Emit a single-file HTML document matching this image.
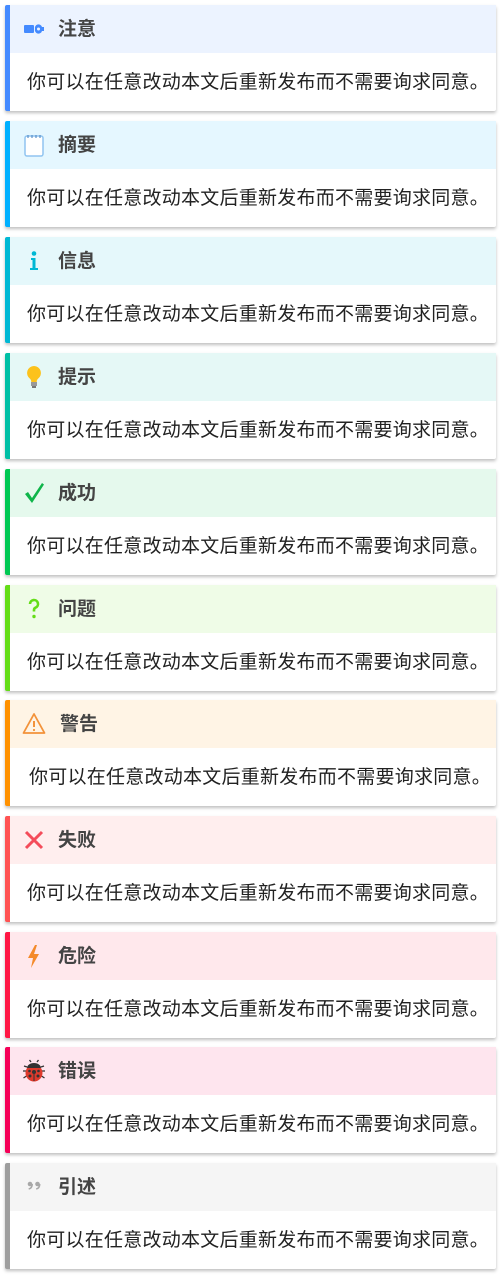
<!DOCTYPE html>
<html><head><meta charset="utf-8"><style>
body{margin:0;width:501px;height:1276px;background:#fff;position:relative;overflow:hidden;font-family:"Liberation Sans","Noto Sans CJK SC",sans-serif}
.b{position:absolute;left:5px;width:491px;height:106px;border-left:5px solid;box-sizing:border-box;background:#fff;box-shadow:0 2px 3px rgba(0,0,0,.25);border-radius:2px}
.h{height:48px;position:relative}
.h svg{position:absolute;left:12px;top:12px;width:24px;height:24px}
.t{position:absolute;left:48px;top:13px;font-size:19px;font-weight:bold;color:#444;line-height:24px}
.c{position:absolute;left:17px;top:66px;font-size:19px;letter-spacing:0.25px;color:#222;line-height:24px;white-space:nowrap}
</style></head><body>

<div class="b" style="top:5px;border-color:#448aff"><div class="h" style="background:#ecf3ff">
<svg viewBox="0 0 24 24"><rect x="2" y="8" width="10" height="8" rx="1" fill="#448aff"/><path d="M13 12a3.5 3.5 0 0 1 7-2h2v4h-2a3.5 3.5 0 0 1-7-2z" fill="#448aff"/><circle cx="16.5" cy="12" r="1.5" fill="#ecf3ff"/></svg>
<div class="t">注意</div></div><div class="c">你可以在任意改动本文后重新发布而不需要询求同意。</div></div>

<div class="b" style="top:121px;border-color:#00b0ff"><div class="h" style="background:#e5f7ff">
<svg viewBox="0 0 24 24"><rect x="3" y="3" width="18" height="20" rx="2" fill="#fff" stroke="#90c4f0" stroke-width="1.5"/><path d="M6 2v3M10 2v3M14 2v3M18 2v3" stroke="#5a8fc8" stroke-width="1.2"/></svg>
<div class="t">摘要</div></div><div class="c">你可以在任意改动本文后重新发布而不需要询求同意。</div></div>

<div class="b" style="top:237px;border-color:#00b8d4"><div class="h" style="background:#e5f8fb">
<svg viewBox="0 0 24 24"><circle cx="12" cy="4.5" r="2.3" fill="#00b8d4"/><path d="M9 9h4.5v10H16v2H8v-2h2.5v-8H9z" fill="#00b8d4"/></svg>
<div class="t">信息</div></div><div class="c">你可以在任意改动本文后重新发布而不需要询求同意。</div></div>

<div class="b" style="top:353px;border-color:#00bfa5"><div class="h" style="background:#e5f8f6">
<svg viewBox="0 0 24 24"><path d="M12 1a7 7 0 0 0-4 12.7c1 .9 1.3 2 1.3 3.3h5.4c0-1.3.3-2.4 1.3-3.3A7 7 0 0 0 12 1z" fill="#fcc21b"/><rect x="9" y="17" width="6" height="4" fill="#999"/><rect x="10" y="21" width="4" height="2" fill="#777"/></svg>
<div class="t">提示</div></div><div class="c">你可以在任意改动本文后重新发布而不需要询求同意。</div></div>

<div class="b" style="top:469px;border-color:#00c853"><div class="h" style="background:#e5f9ed">
<svg viewBox="0 0 24 24"><path d="M3 13l3-2 4 6L20 2l2 1.5L10 22z" fill="#0fb54a"/></svg>
<div class="t">成功</div></div><div class="c">你可以在任意改动本文后重新发布而不需要询求同意。</div></div>

<div class="b" style="top:585px;border-color:#64dd17"><div class="h" style="background:#effce7">
<svg viewBox="0 0 24 24"><path d="M8 7a4 4 0 1 1 5.5 3.7c-1 .5-1.5 1.3-1.5 2.3v1.5" fill="none" stroke="#64dd17" stroke-width="2.6"/><circle cx="12" cy="19.5" r="1.7" fill="#64dd17"/></svg>
<div class="t">问题</div></div><div class="c">你可以在任意改动本文后重新发布而不需要询求同意。</div></div>

<div class="b" style="top:700px;border-color:#ff9100"><div class="h" style="background:#fff4e5">
<svg viewBox="0 0 24 24"><path d="M12 2L1.5 21h21z" fill="none" stroke="#f3923a" stroke-width="1.8" stroke-linejoin="round"/><path d="M12 9v6" stroke="#f3923a" stroke-width="2"/><circle cx="12" cy="18" r="1.1" fill="#f3923a"/></svg>
<div class="t" style="left:50px">警告</div></div><div class="c" style="left:19px">你可以在任意改动本文后重新发布而不需要询求同意。</div></div>

<div class="b" style="top:816px;border-color:#ff5252"><div class="h" style="background:#ffeeee">
<svg viewBox="0 0 24 24"><path d="M4 4l16 16M20 4L4 20" stroke="#f44c5a" stroke-width="3"/></svg>
<div class="t">失败</div></div><div class="c">你可以在任意改动本文后重新发布而不需要询求同意。</div></div>

<div class="b" style="top:932px;border-color:#ff1744"><div class="h" style="background:#ffe8ec">
<svg viewBox="0 0 24 24"><path d="M13 1L6 14h5l-2 10 8-14h-5l3-9z" fill="#f48a2a"/></svg>
<div class="t">危险</div></div><div class="c">你可以在任意改动本文后重新发布而不需要询求同意。</div></div>

<div class="b" style="top:1047px;border-color:#f50057"><div class="h" style="background:#fee5ee">
<svg viewBox="0 0 24 24"><path d="M9 3L7.5 1M15 3l1.5-2M4 12H1M20 12h3M4.5 17l-3 2M19.5 17l3 2M5 8L2 7M19 8l3-1" stroke="#333" stroke-width="1.3"/><circle cx="12" cy="14" r="8.5" fill="#dd3a2c"/><path d="M5 9a7 5 0 0 1 14 0z" fill="#333"/><circle cx="12" cy="13" r="2" fill="#333"/><circle cx="8" cy="17" r="1.5" fill="#333"/><circle cx="16" cy="17" r="1.5" fill="#333"/><circle cx="7.5" cy="12" r="1.3" fill="#333"/><circle cx="16.5" cy="12" r="1.3" fill="#333"/><path d="M12 15v7" stroke="#333" stroke-width="1"/></svg>
<div class="t">错误</div></div><div class="c">你可以在任意改动本文后重新发布而不需要询求同意。</div></div>

<div class="b" style="top:1163px;border-color:#9e9e9e"><div class="h" style="background:#f5f5f5">
<svg viewBox="0 0 24 24"><circle cx="8" cy="9" r="2.3" fill="#a8a8a8"/><path d="M10.2 9c0 3-1.5 4.5-3.5 5" stroke="#a8a8a8" stroke-width="1.6" fill="none"/><circle cx="15.5" cy="9" r="2.3" fill="#a8a8a8"/><path d="M17.7 9c0 3-1.5 4.5-3.5 5" stroke="#a8a8a8" stroke-width="1.6" fill="none"/></svg>
<div class="t">引述</div></div><div class="c">你可以在任意改动本文后重新发布而不需要询求同意。</div></div>

</body></html>
